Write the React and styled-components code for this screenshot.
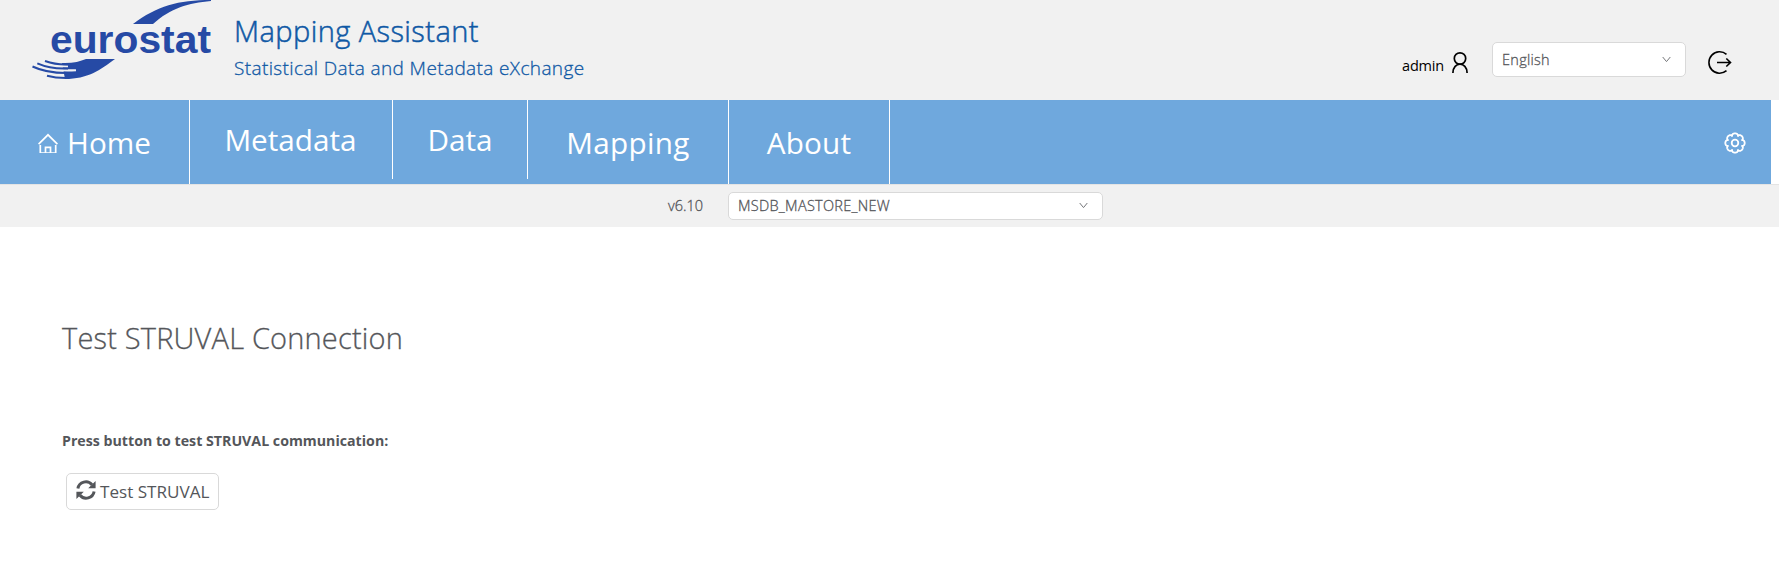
import React from 'react';
import styled, { createGlobalStyle, css } from 'styled-components';

const Global = createGlobalStyle`
  *{box-sizing:border-box}
  body{margin:0;background:#fff;color:#54565a;font-family:"Open Sans","Noto Sans",sans-serif;font-size:14px}
  h1,h2,p{margin:0;font-weight:400}
`;
const semilight = css`font-weight:300;-webkit-text-stroke:.3px currentColor;`;
const Header = styled.header`
  height:100px;background:#f1f1f1;display:flex;align-items:flex-start;color:#0e58a5;
`;
const Logo = styled.svg`display:block;margin-left:30px;width:181px;height:82px;`;
const Word = styled.text`font:700 39px "Liberation Sans",sans-serif;fill:#264aa5;`;
const Titles = styled.div`margin-left:23px;flex:1;display:flex;flex-direction:column;white-space:nowrap;`;
const Title = styled.h1`font-size:29px;line-height:40px;padding-top:11px;${semilight}letter-spacing:.43px;-webkit-text-stroke-width:.5px;`;
const Subtitle = styled.p`font-size:19px;line-height:26px;margin-top:4px;${semilight}letter-spacing:.38px;`;
const Tools = styled.div`display:flex;align-items:flex-start;color:#000;`;
const User = styled.div`display:flex;align-items:flex-start;gap:8px;padding-top:51px;margin-right:24px;line-height:24px;font-size:14.5px;`;
const UserName = styled.span`padding-top:3px;letter-spacing:-.2px;`;
const Select = styled.div`
  display:flex;align-items:center;justify-content:space-between;width:${p => p.$w}px;height:${p => p.$h}px;
  padding:0 14px 1px 9px;background:#fff;border:1px solid #d9d9d9;border-radius:5px;color:#54565a;font-size:14.5px;
  ${semilight}letter-spacing:.28px;
`;
const Language = styled.div`padding-top:42px;`;
const Logout = styled.div`padding:50px 46px 0 21px;`;
const Icon = styled.svg`display:block;fill:none;stroke:currentColor;flex:none;`;
const Nav = styled.nav`
  height:84px;margin-right:8px;background:#6fa8dd;display:flex;color:#fff;align-items:flex-start;
`;
const Item = styled.div`
  display:flex;align-items:center;justify-content:center;gap:9px;width:${p => p.$w}px;
  height:${p => p.$short ? 79 : 84}px;border-right:1px solid #fff;font-size:29.7px;
  padding-right:${p => p.$nudge || 0}px;letter-spacing:${p => p.$track || 0}px;
`;
const Settings = styled.div`margin-left:auto;padding:32px 25px 0 0;`;
const SubBar = styled.div`height:43px;background:#f1f1f1;border-top:1px solid #e4e4e4;display:flex;align-items:flex-start;padding:7px 0 0 668px;`;
const Version = styled.span`width:60px;line-height:27px;font-size:14.5px;${semilight}`;
const Main = styled.main`padding:91px 0 0 62px;display:flex;flex-direction:column;align-items:flex-start;`;
const Heading = styled.h2`font-size:29px;line-height:40px;${semilight}letter-spacing:.18px;`;
const Label = styled.p`font-size:14.2px;line-height:20px;font-weight:700;margin-top:73px;`;
const Button = styled.button`
  margin:22px 0 0 4px;width:153px;height:37px;border:1px solid #d9d9d9;border-radius:5px;background:#fff;padding:0 0 0 9px;
  display:flex;align-items:center;gap:4px;color:#54565a;font:17.1px "Open Sans",sans-serif;white-space:nowrap;
`;
const RefreshIcon = styled.svg`display:block;flex:none;margin-bottom:3px;`;
const Chevron = () => <Icon width="9" height="7" viewBox="0 0 9 7" opacity=".8"><path d="M.7 1 4.5 5.6 8.3 1" /></Icon>;

const gearPath = 'M' + Array.from({ length: 96 }, (_, i) => {
  const a = i / 96 * Math.PI * 2;
  const r = 7.6 + 2.1 * Math.sqrt(Math.abs(Math.cos(4 * a)));
  return `${(11 + r * Math.sin(a)).toFixed(2)} ${(11 - r * Math.cos(a)).toFixed(2)}`;
}).join('L') + 'Z';

export default function App() {
  return <>
    <Global />
    <Header>
      <Logo viewBox="30 0 181 82">
        <g fill="#264aa5">
          <path d="M133 24C157 6 178 0 211 0V1C188 3 171 8 153 24Z" />
          <path d="M62 63C72 63.5 80 61.5 86 59H115C100 70 88 79 65 79Z" />
        </g>
        <g fill="none" stroke="#f1f1f1" strokeWidth="2.1">
          <path d="M42 62C50 65.5 60 66.5 68 66.4" />
          <path d="M35 65C47 70 60 71 76 70.2" />
          <path d="M45 73C53 75 58 75.4 64 75.4" />
        </g>
        <g fill="none" stroke="#264aa5" strokeWidth="2">
          <path d="M45 61C52 63.5 60 64.7 68 64.4" />
          <path d="M37.3 63.3C47 67.5 57 69 68 68.4" />
          <path d="M32.5 66.5C42 71 55 73.2 68 73" />
          <path d="M47 75.8C53 77.4 59 78 66 78" />
        </g>
        <Word x="50" y="52.5" textLength="161" lengthAdjust="spacingAndGlyphs">eurostat</Word>
      </Logo>
      <Titles><Title>Mapping Assistant</Title><Subtitle>Statistical Data and Metadata eXchange</Subtitle></Titles>
      <Tools>
        <User><UserName>admin</UserName>
          <Icon width="16" height="23" viewBox="0 0 16 23" strokeWidth="1.7"><circle cx="8" cy="7.5" r="5.7" /><path d="M.9 22C1 10.3 15 10.3 15.1 22" /></Icon>
        </User>
        <Language><Select $w={194} $h={35}>English<Chevron /></Select></Language>
        <Logout><Icon width="26" height="26" viewBox="0 0 26 26" strokeWidth="1.6"><path d="M19.5 4.3A10.7 10.7 0 1 0 19.5 20.7M10 12.5H23.3M19.3 8.5l4.2 4-4.2 4" /></Icon></Logout>
      </Tools>
    </Header>
    <Nav>
      <Item $w={190}><Icon width="20" height="21" viewBox="0 0 20 21" strokeWidth="1.7"><path d="M.6 12.2 10 2.8 19.4 12.2M2.3 13V21M17.7 13V21M1.5 21H18.5M7.5 21V15.4H12.5V21" /></Icon>Home</Item>
      <Item $w={203} $short $nudge={1}>Metadata</Item>
      <Item $w={135} $short>Data</Item>
      <Item $w={201} $track={0.3}>Mapping</Item>
      <Item $w={161} $track={0.2}>About</Item>
      <Settings><Icon width="22" height="22" viewBox="0 0 22 22" strokeWidth="1.8"><circle cx="11" cy="11" r="3.3" /><path d={gearPath} strokeLinejoin="round" /></Icon></Settings>
    </Nav>
    <SubBar><Version>v6.10</Version><Select $w={375} $h={28}>MSDB_MASTORE_NEW<Chevron /></Select></SubBar>
    <Main>
      <Heading>Test STRUVAL Connection</Heading>
      <Label>Press button to test STRUVAL communication:</Label>
      <Button>
        <RefreshIcon width="20" height="20" viewBox="0 0 20 20">
          <path d="M1.9 8.5A8 8 0 0 1 16 4.8M18.1 11.5A8 8 0 0 1 4 15.2" fill="none" stroke="currentColor" strokeWidth="3" />
          <path d="M19.6 1V8.3H12.2ZM.4 19V11.7H7.8Z" fill="currentColor" />
        </RefreshIcon>
        Test STRUVAL
      </Button>
    </Main>
  </>;
}
